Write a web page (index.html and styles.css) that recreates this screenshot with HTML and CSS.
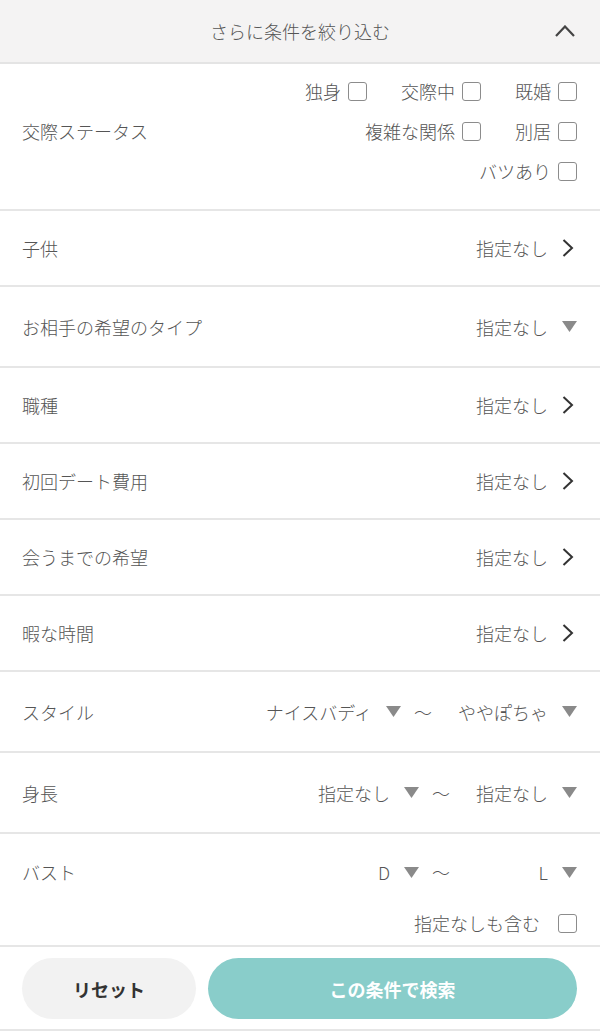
FILE: index.html
```html
<!DOCTYPE html>
<html lang="ja">

<head>
  <meta charset="UTF-8">
  <meta
    name="viewport"
    content="width=device-width, initial-scale=1.0"
  >

  <title>さらに条件を絞り込む</title>

  <link rel="stylesheet" href="styles.css">
</head>

<body>
  <header class="filter-head">
    <span></span>
    <h2 class="filter-head__title">さらに条件を絞り込む</h2>
    <button class="filter-head__toggle" aria-label="閉じる">
      <svg width="20" height="12" viewBox="0 0 20 12">
        <polyline points="1,11 10,1.5 19,11" fill="none" stroke="#444" stroke-width="2.2" />
      </svg>
    </button>
  </header>

  <main class="filter">
    <div class="field field--status">
      <div class="field__label">交際ステータス</div>

      <div class="checks">
        <div class="checks__line">
          <label class="check">独身<span class="check__box"></span></label>
          <label class="check">交際中<span class="check__box"></span></label>
          <label class="check">既婚<span class="check__box"></span></label>
        </div>
        <div class="checks__line">
          <label class="check">複雑な関係<span class="check__box"></span></label>
          <label class="check">別居<span class="check__box"></span></label>
        </div>
        <div class="checks__line">
          <label class="check">バツあり<span class="check__box"></span></label>
        </div>
      </div>
    </div>

    <div class="field">
      <div class="field__label">子供</div>
      <div class="value">
        指定なし
        <svg class="value__arrow" width="15" height="18" viewBox="0 0 15 18">
          <polyline points="1.5,1 10,9 1.5,17" fill="none" stroke="#333" stroke-width="2" />
        </svg>
      </div>
    </div>

    <div class="field field--select">
      <div class="field__label">お相手の希望のタイプ</div>
      <div class="select">
        指定なし
        <svg class="select__caret" width="15" height="11" viewBox="0 0 15 11">
          <polygon points="0,0 15,0 7.5,11" fill="#8a8a8a" />
        </svg>
      </div>
    </div>

    <div class="field">
      <div class="field__label">職種</div>
      <div class="value">
        指定なし
        <svg class="value__arrow" width="15" height="18" viewBox="0 0 15 18">
          <polyline points="1.5,1 10,9 1.5,17" fill="none" stroke="#333" stroke-width="2" />
        </svg>
      </div>
    </div>

    <div class="field">
      <div class="field__label">初回デート費用</div>
      <div class="value">
        指定なし
        <svg class="value__arrow" width="15" height="18" viewBox="0 0 15 18">
          <polyline points="1.5,1 10,9 1.5,17" fill="none" stroke="#333" stroke-width="2" />
        </svg>
      </div>
    </div>

    <div class="field">
      <div class="field__label">会うまでの希望</div>
      <div class="value">
        指定なし
        <svg class="value__arrow" width="15" height="18" viewBox="0 0 15 18">
          <polyline points="1.5,1 10,9 1.5,17" fill="none" stroke="#333" stroke-width="2" />
        </svg>
      </div>
    </div>

    <div class="field">
      <div class="field__label">暇な時間</div>
      <div class="value">
        指定なし
        <svg class="value__arrow" width="15" height="18" viewBox="0 0 15 18">
          <polyline points="1.5,1 10,9 1.5,17" fill="none" stroke="#333" stroke-width="2" />
        </svg>
      </div>
    </div>

    <div class="field field--select">
      <div class="field__label">スタイル</div>
      <div class="range">
        <div class="select">
          ナイスバディ
          <svg class="select__caret" width="15" height="11" viewBox="0 0 15 11">
            <polygon points="0,0 15,0 7.5,11" fill="#8a8a8a" />
          </svg>
        </div>
        <span class="range__sep">〜</span>
        <div class="select select--to">
          ややぽちゃ
          <svg class="select__caret" width="15" height="11" viewBox="0 0 15 11">
            <polygon points="0,0 15,0 7.5,11" fill="#8a8a8a" />
          </svg>
        </div>
      </div>
    </div>

    <div class="field field--select">
      <div class="field__label">身長</div>
      <div class="range">
        <div class="select">
          指定なし
          <svg class="select__caret" width="15" height="11" viewBox="0 0 15 11">
            <polygon points="0,0 15,0 7.5,11" fill="#8a8a8a" />
          </svg>
        </div>
        <span class="range__sep">〜</span>
        <div class="select select--to">
          指定なし
          <svg class="select__caret" width="15" height="11" viewBox="0 0 15 11">
            <polygon points="0,0 15,0 7.5,11" fill="#8a8a8a" />
          </svg>
        </div>
      </div>
    </div>

    <div class="field field--bust">
      <div class="field__main">
        <div class="field__label">バスト</div>
        <div class="range">
          <div class="select">
            D
            <svg class="select__caret" width="15" height="11" viewBox="0 0 15 11">
              <polygon points="0,0 15,0 7.5,11" fill="#8a8a8a" />
            </svg>
          </div>
          <span class="range__sep">〜</span>
          <div class="select select--to">
            L
            <svg class="select__caret" width="15" height="11" viewBox="0 0 15 11">
              <polygon points="0,0 15,0 7.5,11" fill="#8a8a8a" />
            </svg>
          </div>
        </div>
      </div>

      <div class="field__extra">
        <label class="check check--wide">指定なしも含む<span class="check__box"></span></label>
      </div>
    </div>
  </main>

  <footer class="actions">
    <button class="actions__reset">リセット</button>
    <button class="actions__search">この条件で検索</button>
  </footer>
</body>

</html>
```

FILE: styles.css
```css
body {
  margin: 0;
  background-color: #fff;
  color: #555;
  font-family: 'Noto Sans CJK JP', 'Noto Sans', sans-serif;
  font-size: 18px;
  font-weight: 300;
}

.filter-head {
  height: 62px;
  padding: 0 25px;

  display: grid;
  grid-template-columns: 1fr auto 1fr;
  align-items: center;

  background-color: #f4f3f3;
  border-bottom: 2px solid #e4e4e4;
}

.filter-head__title {
  margin: 0;
  font-size: 18px;
  font-weight: 300;
  color: #555;
}

.filter-head__toggle {
  justify-self: end;
  padding: 0;
  border: none;
  background: none;
  display: flex;
}

.field {
  height: 74px;
  padding: 0 23px 0 22px;

  display: flex;
  align-items: center;
  justify-content: space-between;

  border-bottom: 2px solid #e6e6e6;
}

.field--select {
  height: 79px;
}

.field--status {
  height: auto;
  padding-top: 7px;
  padding-bottom: 18px;
}

.field--bust {
  height: auto;
  display: block;
  padding-bottom: 9px;
}

.field__main {
  height: 76px;
  display: flex;
  align-items: center;
  justify-content: space-between;
}

.field__extra {
  height: 26px;
  display: flex;
  align-items: center;
  justify-content: flex-end;
}

.checks__line {
  height: 40px;
  display: flex;
  align-items: center;
  justify-content: flex-end;
  column-gap: 34px;
}

.check {
  display: flex;
  align-items: center;
  gap: 7px;
}

.check--wide {
  gap: 18px;
}

.check__box {
  width: 19px;
  height: 19px;
  box-sizing: border-box;
  border: 1.5px solid #8c8c8c;
  border-radius: 3px;
  background-color: #fff;
}

.value,
.select {
  display: flex;
  align-items: center;
}

.value__arrow {
  margin-left: 14px;
}

.select__caret {
  margin-left: 14px;
}

.range {
  display: flex;
  align-items: center;
}

.range__sep {
  margin: 0 13px;
}

.select--to {
  min-width: 114px;
  padding-left: 13px;
  box-sizing: border-box;
  justify-content: flex-end;
}

.actions {
  padding: 11px 23px 10px 22px;

  display: flex;
  gap: 12px;

  border-bottom: 2px solid #e6e6e6;
}

.actions__reset,
.actions__search {
  height: 61px;
  border: none;
  border-radius: 31px;

  font-family: 'Noto Sans CJK JP', 'Noto Sans', sans-serif;
  font-size: 18px;
  font-weight: bold;
}

.actions__reset {
  width: 174px;
  background-color: #f2f2f2;
  color: #333;
}

.actions__search {
  flex: 1;
  background-color: #89cdca;
  color: #fff;
}
```
